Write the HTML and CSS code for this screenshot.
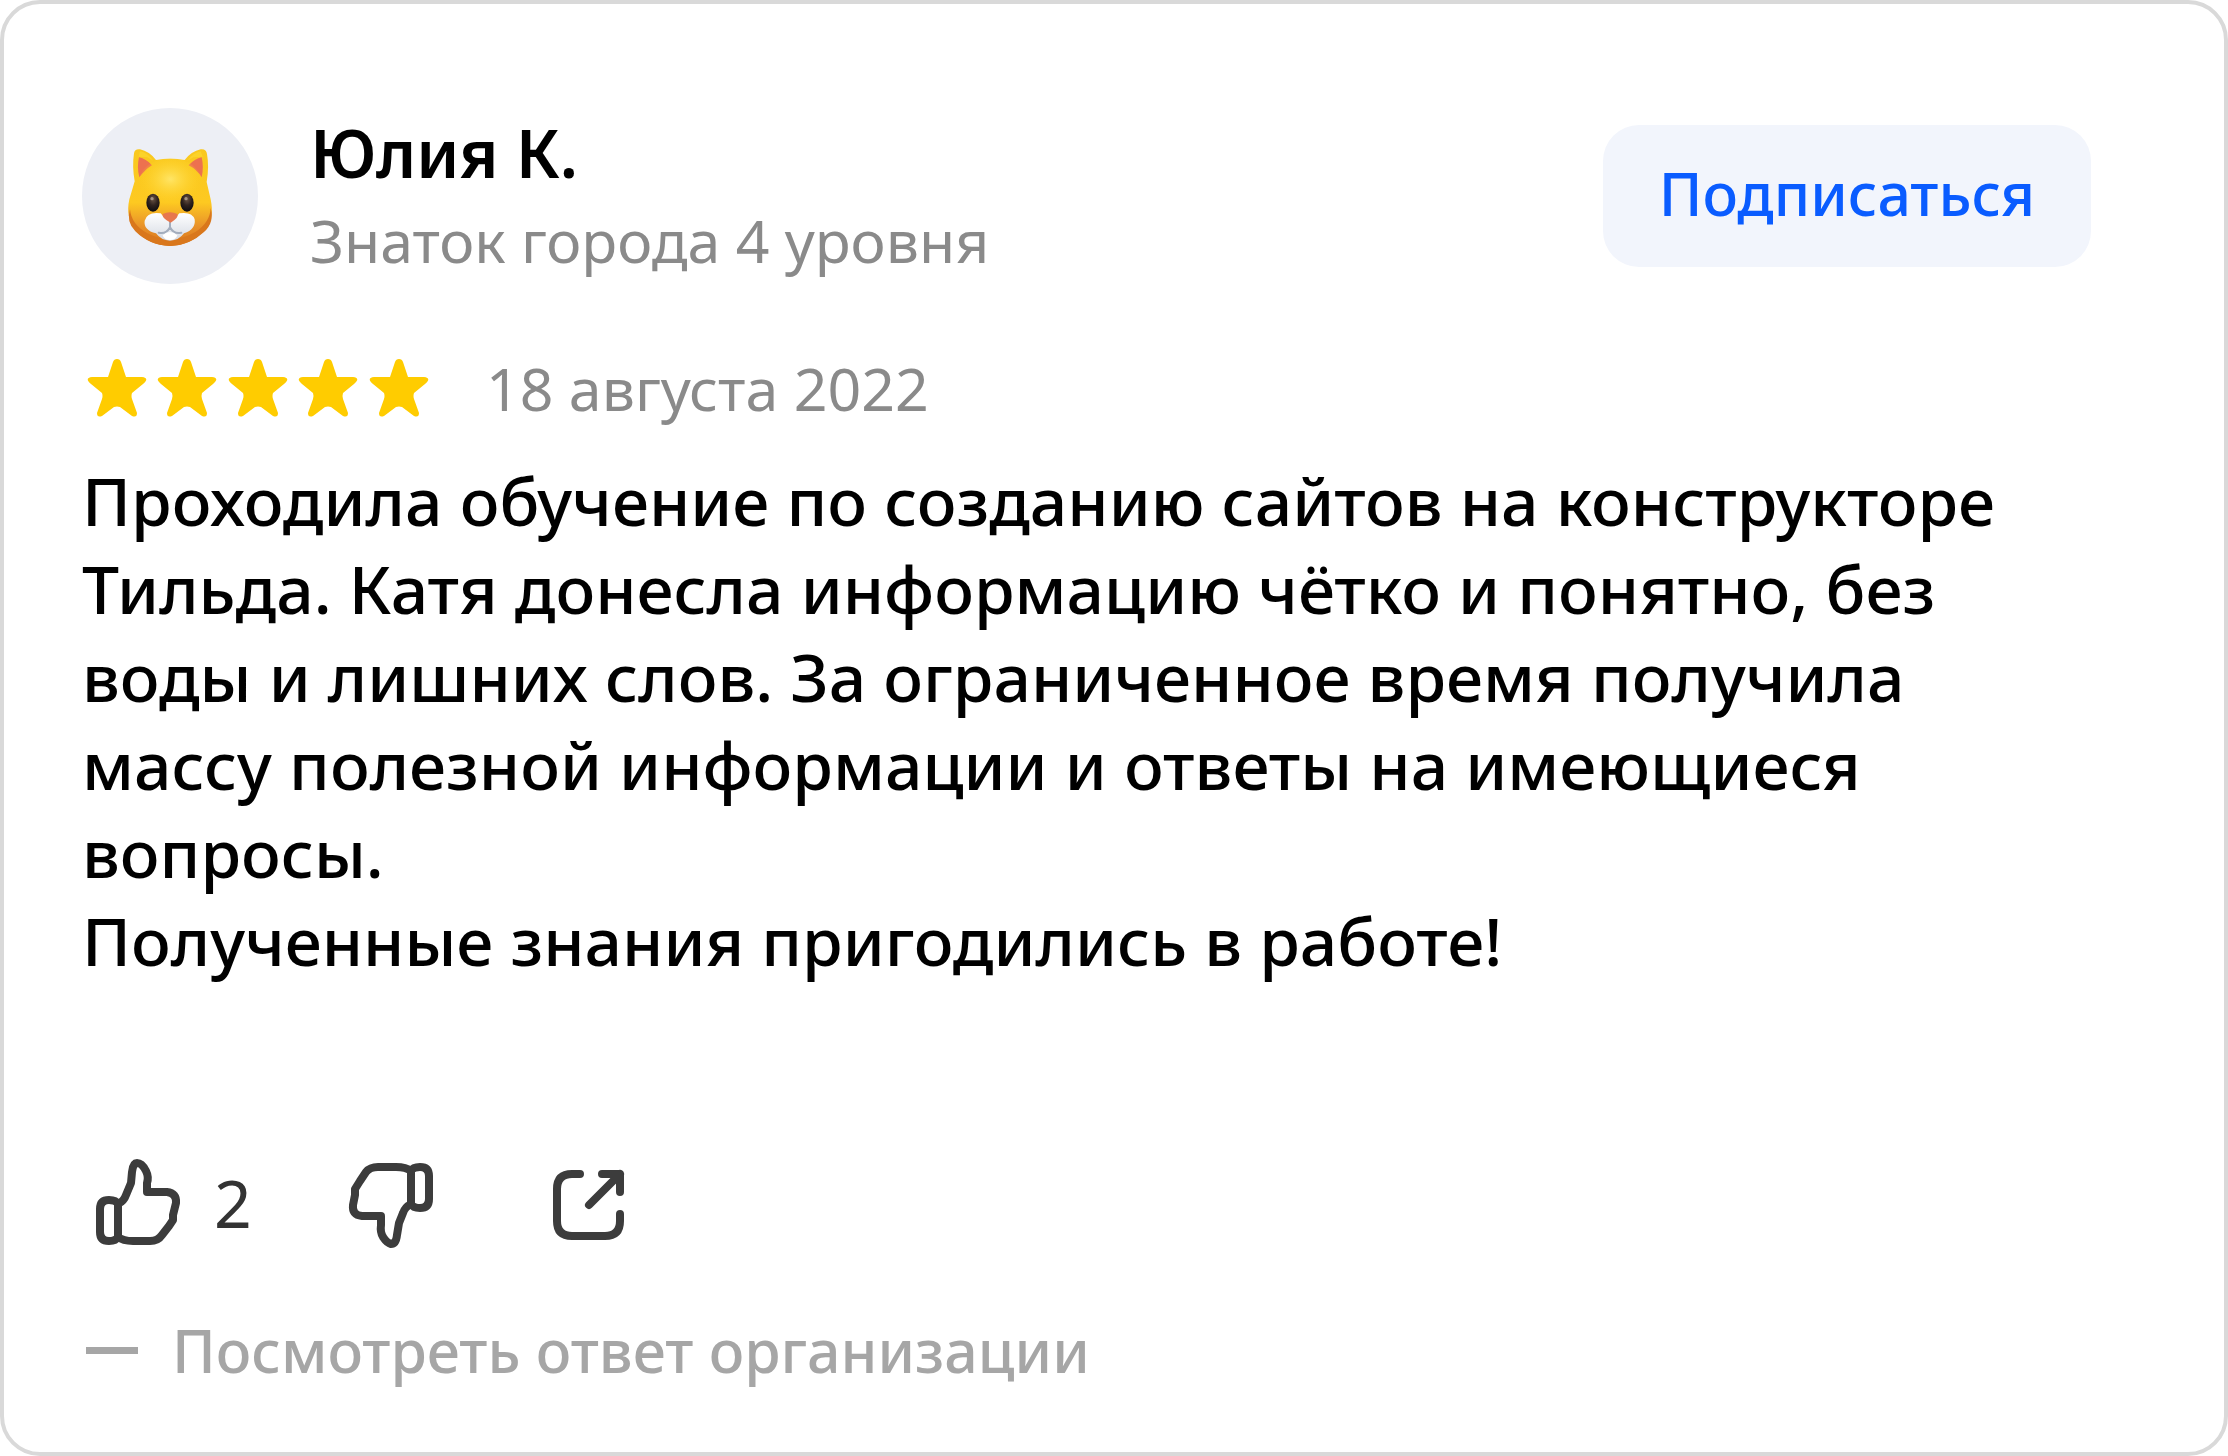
FILE: index.html
```html
<!DOCTYPE html>
<html lang="ru">
<head>
    <meta charset="UTF-8">
    <meta name="viewport" content="width=device-width, initial-scale=1.0">
    <title>Отзыв - Юлия К.</title>
    <link rel="stylesheet" href="styles.css">
</head>
<body>

<article class="review">
    <!-- Author -->
    <header class="author">
        <svg class="avatar" viewBox="36 36 528 528" aria-hidden="true">
            <defs>
                <linearGradient id="fur" x1="0" y1="0" x2="0" y2="1">
                    <stop offset="0" stop-color="#f9c81e"/>
                    <stop offset="0.55" stop-color="#fdc921"/>
                    <stop offset="0.8" stop-color="#e8912a"/>
                    <stop offset="1" stop-color="#d87418"/>
                </linearGradient>
                <radialGradient id="shine" cx="0.5" cy="0.4" r="0.5">
                    <stop offset="0" stop-color="#ffe566"/>
                    <stop offset="1" stop-color="#ffd21f" stop-opacity="0"/>
                </radialGradient>
                <linearGradient id="muzzle" x1="0" y1="0" x2="0" y2="1">
                    <stop offset="0" stop-color="#ffffff"/>
                    <stop offset="1" stop-color="#d5dae3"/>
                </linearGradient>
                <radialGradient id="eye" cx="0.5" cy="0.3" r="0.7">
                    <stop offset="0" stop-color="#6b5444"/>
                    <stop offset="0.5" stop-color="#30231f"/>
                    <stop offset="1" stop-color="#0d0c10"/>
                </radialGradient>
            </defs>
            <circle cx="300" cy="300" r="264" fill="#edeff5"/>
            <path fill="url(#fur)" d="M192 172Q194 158 210 160Q238 166 258 192Q300 184 344 192Q364 166 392 160Q409 158 411 174Q418 212 410 258Q416 284 422 310Q434 368 406 400Q366 448 300 450Q236 448 196 402Q166 366 178 310Q186 284 194 256Q186 212 192 172Z"/>
            <path fill="#fbd32a" d="M210 166Q232 170 250 194L232 184L206 182Z M392 166Q370 170 352 194L370 184L398 182Z"/>
            <path fill="#ed714f" d="M207 184Q228 188 246 208Q226 220 208 244Q200 214 207 184Z M395 184Q374 188 356 208Q380 220 395 244Q402 214 395 184Z"/>
            <ellipse cx="301" cy="265" rx="98" ry="78" fill="url(#shine)"/>
            <path fill="#d9771c" d="M180 340Q184 386 232 412Q268 430 300 430Q338 430 376 408Q420 380 422 336Q434 380 402 408Q360 448 300 450Q238 448 196 406Q168 378 180 340Z"/>
            <path fill="url(#muzzle)" d="M272 352Q300 390 328 352Q366 346 374 370Q378 400 342 412Q326 434 300 434Q274 434 258 412Q220 402 224 374Q232 346 272 352Z"/>
            <path fill="none" stroke="#a3adbd" stroke-width="6" stroke-linecap="round" d="M300 378V394M300 394Q288 416 266 410M300 394Q312 416 334 410"/>
            <path fill="#ffffff" d="M278 418Q300 398 322 418Q318 432 300 432Q282 432 278 418Z"/>
            <path fill="#e7774d" d="M278 354Q300 344 322 354Q328 364 302 380Q274 366 278 354Z"/>
            <ellipse cx="249" cy="320" rx="20" ry="27" fill="url(#eye)"/>
            <ellipse cx="351" cy="320" rx="20" ry="27" fill="url(#eye)"/>
            <circle cx="246" cy="308" r="5" fill="#a39284"/>
            <circle cx="348" cy="308" r="5" fill="#a39284"/>
        </svg>
        <div class="author-info">
            <h2 class="author-name">Юлия К.</h2>
            <p class="author-level">Знаток города 4 уровня</p>
        </div>
        <button class="subscribe" type="button">Подписаться</button>
    </header>

    <!-- Rating and date -->
    <div class="rating">
        <svg class="stars" viewBox="0 0 344 64" role="img" aria-label="5 из 5">
            <defs>
                <path id="star" d="M31 3Q34 3 35 6L40 21H56Q64 22 57 28L46 37Q45 40 46 43L51 57Q51 62 46 60L34 51Q31 50 28 51L16 60Q11 62 11 57L16 43Q17 40 16 37L5 28Q-2 22 6 21H22L27 6Q28 3 31 3Z"/>
            </defs>
            <g fill="#ffcc00">
                <use href="#star"/>
                <use href="#star" x="70"/>
                <use href="#star" x="141"/>
                <use href="#star" x="211"/>
                <use href="#star" x="282"/>
            </g>
        </svg>
        <time class="date" datetime="2022-08-18">18 августа 2022</time>
    </div>

    <p class="text">Проходила обучение по созданию сайтов на конструкторе Тильда. Катя донесла информацию чётко и понятно, без воды и лишних слов. За ограниченное время получила массу полезной информации и ответы на имеющиеся вопросы.<br>Полученные знания пригодились в работе!</p>

    <!-- Reactions -->
    <div class="actions">
        <button class="action" type="button" aria-label="Нравится">
            <svg class="icon" viewBox="10 16 92 92">
                <path d="M38 64Q36 60 29 60Q20 60 20 69V92Q20 101 29 101Q36 101 38 97Z"/>
                <path d="M38 64Q44 61 46 55L51 43L52 32Q53 23 57 23Q62 23 66 31Q69 37 67 43V52H87Q97 53 96 63L93 75V80L89 86L82 95Q78 101 70 101H53Q43 101 38 97"/>
            </svg>
            <span class="count">2</span>
        </button>
        <button class="action" type="button" aria-label="Не нравится">
            <svg class="icon" viewBox="266 18 92 92">
                <path d="M331 33Q333 29 340 29Q349 29 349 38V61Q349 70 340 70Q333 70 331 66Z"/>
                <path d="M331 66Q325 69 323 75L319 85L317 97Q316 106 311 106Q307 105 303 99Q300 94 301 87V78H282Q272 77 273 67L275 57V51L280 43L286 34Q290 29 298 29H316Q326 29 331 33"/>
            </svg>
        </button>
        <button class="action share" type="button" aria-label="Поделиться">
            <svg class="icon" viewBox="464 16 92 92">
                <path d="M500 34H492Q477 34 477 49V81Q477 96 492 96H525Q540 96 540 81V74"/>
                <path d="M522 34H540V52M540 34L509 65"/>
            </svg>
        </button>
    </div>

    <a class="answer" href="#">Посмотреть ответ организации</a>
</article>

</body>
</html>
```
FILE: styles.css
```css
* {
    box-sizing: border-box;
}

body {
    margin: 0;
    font-family: "Noto Sans", "Open Sans", sans-serif;
    color: #000;
    background-color: #fff;
}

h2,
p {
    margin: 0;
}

button {
    border: none;
    font-family: inherit;
    cursor: pointer;
}

.review {
    min-height: 100vh;
    padding: 104px 133px 30px 78px;
    border: 4px solid #d9d9d9;
    border-radius: 40px;
}

/* Author */
.author {
    display: flex;
    align-items: center;
}

.avatar {
    flex: none;
    width: 176px;
    height: 176px;
    margin-right: 52px;
}

.author-info {
    flex: 1;
}

.author-name {
    font-size: 66px;
    font-weight: 600;
    line-height: 88px;
}

.author-level {
    font-size: 59px;
    line-height: 88px;
    color: #8a8a8a;
}

.subscribe {
    padding: 0 56px 6px;
    border-radius: 36px;
    font-size: 59px;
    font-weight: 500;
    line-height: 136px;
    color: #0a5cff;
    background-color: #f2f5fc;
}

/* Rating */
.rating {
    display: flex;
    align-items: center;
    gap: 56px;
    margin-top: 60px;
    padding-left: 4px;
}

.stars {
    width: 344px;
    height: 64px;
}

.date {
    font-size: 59px;
    line-height: 88px;
    color: #8a8a8a;
}

.text {
    margin-top: 24px;
    padding-right: 60px;
    font-size: 66px;
    font-weight: 500;
    line-height: 88px;
}

/* Reactions */
.actions {
    display: flex;
    align-items: center;
    gap: 94px;
    margin-top: 172px;
    padding-left: 8px;
}

.action {
    display: flex;
    align-items: center;
    gap: 32px;
    padding: 0;
    color: #333;
    background: none;
}

.share {
    margin-left: 12px;
}

.icon {
    width: 92px;
    height: 92px;
    fill: none;
    stroke: #3c3c3c;
    stroke-width: 8px;
    stroke-linecap: round;
    stroke-linejoin: round;
}

.count {
    font-size: 66px;
    line-height: 88px;
}

/* Organization answer */
.answer {
    display: flex;
    align-items: center;
    gap: 34px;
    margin-top: 58px;
    padding-left: 4px;
    font-size: 59px;
    font-weight: 500;
    line-height: 88px;
    color: #a6a6a6;
    text-decoration: none;
}

.answer::before {
    content: "";
    width: 52px;
    height: 7px;
    background-color: #a6a6a6;
}
```
